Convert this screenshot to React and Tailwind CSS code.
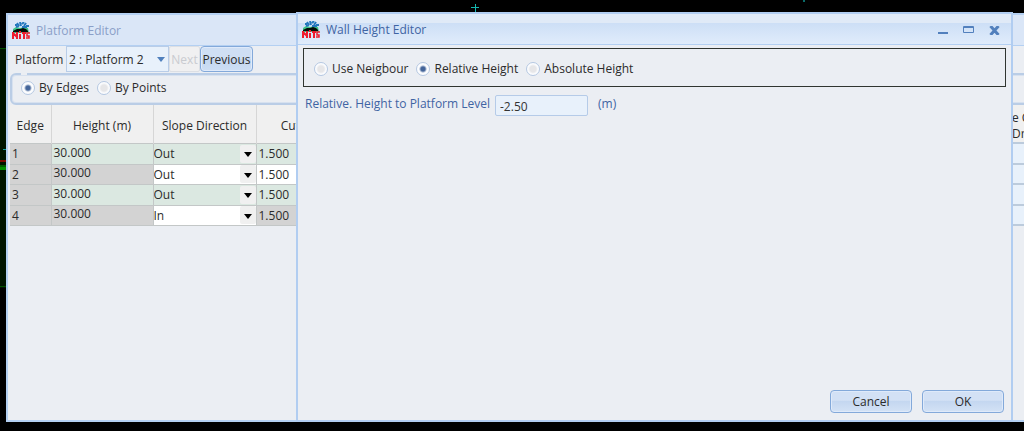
import { useState } from "react";

const rows = [
  { edge: 1, height: "30.000", slope: "Out", cut: "1.500" },
  { edge: 2, height: "30.000", slope: "Out", cut: "1.500" },
  { edge: 3, height: "30.000", slope: "Out", cut: "1.500" },
  { edge: 4, height: "30.000", slope: "In", cut: "1.500" },
];

function Logo() {
  return (
    <svg width="18" height="18" viewBox="0 0 18 18" aria-hidden="true">
      <path d="M1 11V7l3-2 4 1 5-1 3 1 1 5z" fill="#3fc487" />
      <path
        d="M3 3h2M5 1l2 3M8 0l1 4M10 2l2-2M12 4l2-3M14 4h3M4 5l3-1M10 5h5"
        stroke="#2377bd"
        strokeWidth="2"
      />
      <path d="M1 9l4-2 3 0 3-1 3 1 2 2v1H1z" fill="#050d08" />
      <path
        d="M1 17v-7M1 11l4 4M5 17v-7M8 12v5M8 9v2M10 11h4M12 11v6"
        stroke="#ee1c2e"
        strokeWidth="2"
        fill="none"
      />
      <path d="M18 11h-3v3h2v2h-3" stroke="#ee1c2e" strokeWidth="1.5" fill="none" />
    </svg>
  );
}

// Lines of the CAD drawing that show around the windows
function Drawing() {
  return (
    <>
      <svg className="absolute top-12 left-0" width="6" height="240" aria-hidden="true">
        <path d="M0 0h6v240H0z" fill="#001500" />
        <path d="M0 .5h6M0 238.5h6" stroke="#005000" strokeWidth="1" />
        <path d="M3 101.5h3" stroke="#12a09a" />
        <path d="M0 113h6" stroke="#7c0a00" strokeWidth="2" />
        <path d="M0 118h6" stroke="#005c00" strokeWidth="2" />
        <path d="M0 120.5h6" stroke="#009000" strokeWidth="3" />
      </svg>
      <svg className="absolute top-1 left-[471px]" width="8" height="8" aria-hidden="true">
        <path d="M0 3.5h8M4.5 0v8" stroke="#14b8b0" />
      </svg>
      <svg className="absolute top-0 left-[803px]" width="2" height="2" aria-hidden="true">
        <path d="M0 0h2v2H0z" fill="#0b6a68" />
      </svg>
    </>
  );
}

function TitleBar({ title, active, children }) {
  return (
    <header
      className={
        active
          ? "flex h-[31px] shrink-0 items-center gap-1.5 border-b border-[#b4d0f2] bg-linear-to-b from-[#e0eaf7] from-30% via-[#cddff6] via-31% to-[#e0ecfb] pt-0.5 pl-1 text-[#3f64a3]"
          : "flex h-[31px] shrink-0 items-center gap-1.5 border-b border-[#b4d0f2] bg-[#dae6f7] pt-0.5 pl-1 text-[#8b9fc8]"
      }
    >
      <Logo />
      <h1>{title}</h1>
      {children}
    </header>
  );
}

function Radio({ name, label, defaultChecked }) {
  return (
    <label className="flex items-center gap-1">
      <input
        type="radio"
        name={name}
        defaultChecked={defaultChecked}
        className="size-[14px] appearance-none rounded-full border border-[#b5c8e2] bg-[radial-gradient(circle,#e6e6e8_0_3px,#fbfcfe_5px)] checked:bg-[radial-gradient(circle,#44659a_0_2px,#fbfcfe_4px)]"
      />
      {label}
    </label>
  );
}

function Arrow({ className }) {
  return (
    <svg width="8" height="5" viewBox="0 0 8 5" className={className} aria-hidden="true">
      <path d="M0 0h8L4 5z" fill="currentColor" />
    </svg>
  );
}

function EdgeTable() {
  return (
    <table className="ml-0.5 w-full table-fixed border-collapse">
      <thead>
        <tr className="h-[38px] bg-[#f0f0f0]">
          <th className="w-[41px] border-r border-[#d6d6d6] pt-1 font-normal">Edge</th>
          <th className="w-[102px] border-r border-[#d6d6d6] pt-1 font-normal">Height (m)</th>
          <th className="w-[103px] border-r border-[#d6d6d6] pt-1 font-normal">Slope Direction</th>
          <th className="w-[102px] pt-1 font-normal">Cut Slope</th>
          <th></th>
          <th className="w-[14px] overflow-hidden pt-1 text-left leading-4 font-normal whitespace-nowrap">
            e C<br />
            Dra
          </th>
        </tr>
      </thead>
      <tbody>
        {rows.map((row) => (
          <tr
            key={row.edge}
            className="group border-y border-[#c3c7c7] bg-[#d3d3d3] odd:h-[21px] odd:bg-[#dbe8e1] even:h-[20px]"
          >
            <td className="border-r border-[#c3c7c7] bg-[#d3d3d3] pt-px pl-0.5">{row.edge}</td>
            <td className="border-r border-[#c3c7c7] pb-0.5 pl-0.5">{row.height}</td>
            <td className="border-r border-[#c3c7c7] group-even:bg-white">
              <div className="relative">
                <select
                  aria-label={`Slope direction of edge ${row.edge}`}
                  defaultValue={row.slope}
                  className="block h-[18px] w-full appearance-none pt-px"
                >
                  <option>Out</option>
                  <option>In</option>
                </select>
                <span className="pointer-events-none absolute inset-y-0 right-0 flex w-4 items-center justify-center rounded-xs bg-[#f0f0f0] pt-0.5">
                  <Arrow className="text-black" />
                </span>
              </div>
            </td>
            <td className={row.edge === 2 ? "bg-white pt-px pl-0.5" : "pt-px pl-0.5"}>{row.cut}</td>
            <td></td>
            <td className="border-y-2 border-[#bccbdc] bg-[#e8f1fb]"></td>
          </tr>
        ))}
      </tbody>
    </table>
  );
}

function PlatformEditor() {
  return (
    <section className="relative flex flex-1 flex-col overflow-hidden border-2 border-r-0 border-[#b4d0f2] bg-[#ebeef3]">
      <TitleBar title="Platform Editor" />
      <div className="flex h-[26px] shrink-0 items-center pl-[7px]">
        <label htmlFor="platform" className="w-[51px] pt-0.5">
          Platform
        </label>
        <div className="relative">
          <select
            id="platform"
            className="block h-[26px] w-[103px] appearance-none border border-[#b9cde8] bg-[#e8f1fb] pt-0.5 pl-0.5"
          >
            <option>2 : Platform 2</option>
          </select>
          <Arrow className="pointer-events-none absolute top-[11px] right-1 text-[#5080bd]" />
        </div>
        <button
          disabled
          className="h-[26px] w-[31px] rounded-xs border border-[#dcdfe4] bg-[#f0f0f1] pt-px text-[#c9cbd0]"
        >
          Next
        </button>
        <button className="h-[26px] w-[53px] rounded-sm border border-[#83a9da] bg-linear-to-b from-[#cfdff4] from-50% via-[#c4d7f0] via-51% to-[#cddef4] pt-px inset-ring inset-ring-[#dfeafa]">
          Previous
        </button>
      </div>
      <fieldset className="mt-px mr-[-8px] ml-0.5 shrink-0 rounded-md border-2 border-[#bacde6] pt-1 pb-[7px] pl-[9px] inset-ring inset-ring-[#d7e1ef]">
        <legend className="h-0.5 w-[6px]"></legend>
        <div className="flex h-[17px] items-center gap-2">
          <Radio name="mode" label="By Edges" defaultChecked />
          <Radio name="mode" label="By Points" />
        </div>
      </fieldset>
      <EdgeTable />
    </section>
  );
}

function DialogButton({ children }) {
  return (
    <button className="h-[23px] w-[82px] rounded-sm border border-[#83a9da] bg-linear-to-b from-[#d3e1f5] from-45% via-[#c3d6f0] via-46% to-[#d3e2f5] pt-px inset-ring inset-ring-[#dfeafa]">
      {children}
    </button>
  );
}

function WallHeightEditor() {
  const [height, setHeight] = useState("-2.50");

  return (
    <section className="absolute top-[12px] right-[11px] bottom-[9px] left-[296px] flex flex-col border-2 border-[#b1cdf1] bg-[#ebeef3]">
      <TitleBar title="Wall Height Editor" active>
        <div className="ml-auto flex items-center gap-[15px] pr-[11px] text-[#5280bd]">
          <button aria-label="Minimize">
            <svg width="10" height="8" viewBox="0 0 10 8">
              <path d="M0 7h10" stroke="currentColor" strokeWidth="2" />
            </svg>
          </button>
          <button aria-label="Maximize">
            <svg width="11" height="8" viewBox="0 0 11 8">
              <path d="M.5.5h10v6H.5zM0 1.5h11" stroke="currentColor" fill="none" />
            </svg>
          </button>
          <button aria-label="Close">
            <svg width="11" height="9" viewBox="0 0 11 9">
              <path d="M1.5 0l8 9M9.5 0l-8 9" stroke="currentColor" strokeWidth="3" />
            </svg>
          </button>
        </div>
      </TitleBar>
      <div className="mx-[5px] mt-[3px] flex h-[39px] shrink-0 items-center gap-2 border border-[#303530] pt-0.5 pl-2.5">
        <Radio name="wall" label="Use Neigbour" />
        <Radio name="wall" label="Relative Height" defaultChecked />
        <Radio name="wall" label="Absolute Height" />
      </div>
      <div className="mt-2 flex pl-[7px] text-[#3f64a3]">
        <label htmlFor="height" className="w-[190px] pt-px whitespace-nowrap">
          Relative. Height to Platform Level
        </label>
        <input
          id="height"
          value={height}
          onChange={(e) => setHeight(e.target.value)}
          className="h-[21px] w-[93px] rounded-xs border border-[#b5cbe8] bg-[#e8f1fb] px-1 pt-px text-[#333]"
        />
        <span className="ml-2.5 pt-px">(m)</span>
      </div>
      <div className="mt-auto flex justify-end gap-2.5 pr-[7px] pb-[7px]">
        <DialogButton>Cancel</DialogButton>
        <DialogButton>OK</DialogButton>
      </div>
    </section>
  );
}

export default function App() {
  return (
    <main className="relative flex h-screen overflow-hidden bg-black pt-[13px] pb-[9px] pl-[6px] font-['Open_Sans','Noto_Sans',sans-serif] text-[12px] leading-4 text-[#2b2b2b]">
      <Drawing />
      <PlatformEditor />
      <WallHeightEditor />
    </main>
  );
}
